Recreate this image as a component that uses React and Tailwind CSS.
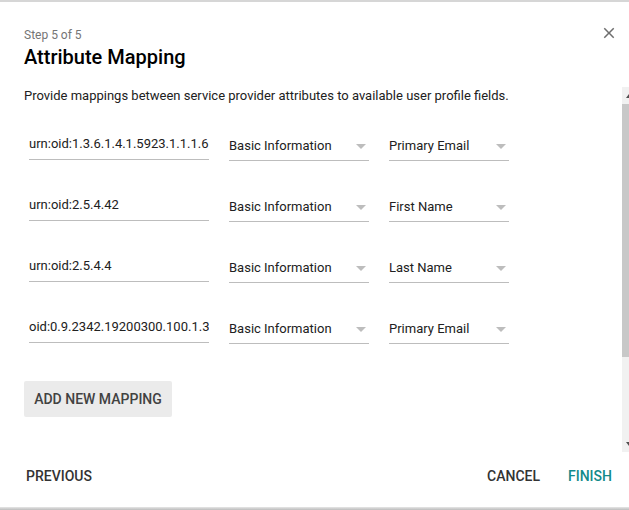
import { useState } from "react";

const rows = [
    { attr: "urn:oid:1.3.6.1.4.1.5923.1.1.1.6", group: "Basic Information", field: "Primary Email" },
    { attr: "urn:oid:2.5.4.42", group: "Basic Information", field: "First Name" },
    { attr: "urn:oid:2.5.4.4", group: "Basic Information", field: "Last Name" },
    { attr: "oid:0.9.2342.19200300.100.1.3", group: "Basic Information", field: "Primary Email" },
];

function Caret() {
    return (
        <svg width="10" height="5" viewBox="0 0 10 5" className="shrink-0">
            <path d="M0 0h10L5 5z" fill="#bdbdbd" />
        </svg>
    );
}

function SelectField({ value, width }) {
    return (
        <div className={`${width} h-[30px] flex items-center justify-between pt-[1px] border-b border-[#bdbdbd] pr-[3px]`}>
            <span>{value}</span>
            <Caret />
        </div>
    );
}

export default function App() {
    const [mappings] = useState(rows);

    return (
        <div
            className="w-[629px] h-[510px] bg-white flex flex-col overflow-hidden border-t-2 border-[#d6d6d6] relative"
            style={{ fontFamily: "Roboto, 'Liberation Sans', sans-serif" }}
        >
            {/* Header */}
            <div className="h-[85px] flex justify-between pl-6 pr-[11px] pt-[26px] shrink-0">
                <div>
                    <p className="text-[12px] leading-[14px] text-[#757575]">Step 5 of 5</p>
                    <h1 className="text-[20px] leading-[28px] font-medium text-black mt-[1px]">Attribute Mapping</h1>
                </div>
                <button className="w-[18px] h-[18px] mt-[-4px] text-[#6e6e6e]">
                    <svg width="18" height="18" viewBox="0 0 24 24" fill="currentColor">
                        <path d="M19 6.41 17.59 5 12 10.59 6.41 5 5 6.41 10.59 12 5 17.59 6.41 19 12 13.41 17.59 19 19 17.59 13.41 12z" />
                    </svg>
                </button>
            </div>

            {/* Scrolling body */}
            <div className="h-[365px] flex shrink-0">
                <div className="flex-1 pl-6 overflow-hidden">
                    <p className="text-[13px] leading-[18px] text-[#212121]">
                        Provide mappings between service provider attributes to available user profile fields.
                    </p>
                    <div className="mt-[26px] pl-[5px] flex flex-col gap-[31px] text-[13px] text-[#212121]">
                        {mappings.map((m, i) => (
                            <div key={i} className="flex gap-5 items-start">
                                <div className="w-[180px] h-[29px] pt-[3px] leading-[20px] border-b border-[#bdbdbd] whitespace-nowrap overflow-hidden">
                                    {m.attr}
                                </div>
                                <SelectField value={m.group} width="w-[140px]" />
                                <SelectField value={m.field} width="w-[120px]" />
                            </div>
                        ))}
                    </div>
                    <button className="mt-[37px] w-[148px] h-[36px] bg-[#ebebeb] rounded-[2px] text-[14px] font-medium text-[#424242]">
                        ADD NEW MAPPING
                    </button>
                </div>
                {/* scrollbar, clipped at the window edge */}
                <div className="w-[7px] bg-[#f1f1f1] flex flex-col">
                    <div className="h-[17px] flex items-center pl-[4px]">
                        <svg width="3" height="4" viewBox="0 0 3 4"><path d="M0 4 3 0v4z" fill="#505050" /></svg>
                    </div>
                    <div className="h-[253px] bg-[#c8c8c8]" />
                    <div className="flex-1" />
                    <div className="h-[17px] flex items-center pl-[4px]">
                        <svg width="3" height="4" viewBox="0 0 3 4"><path d="M0 0 3 4V0z" fill="#505050" /></svg>
                    </div>
                </div>
            </div>

            {/* Footer */}
            <div className="flex-1 flex items-start justify-between pt-[6px] pl-[18px] pr-[9px] text-[14px] font-medium">
                <button className="h-[36px] px-2 text-[#333]">PREVIOUS</button>
                <div className="flex gap-3">
                    <button className="h-[36px] px-2 text-[#333]">CANCEL</button>
                    <button className="h-[36px] px-2 text-[#138a8a]">FINISH</button>
                </div>
            </div>
            <div className="h-[3px] bg-gradient-to-b from-[#e6e6e6] to-[#bcbcbc] shrink-0" />
        </div>
    );
}
